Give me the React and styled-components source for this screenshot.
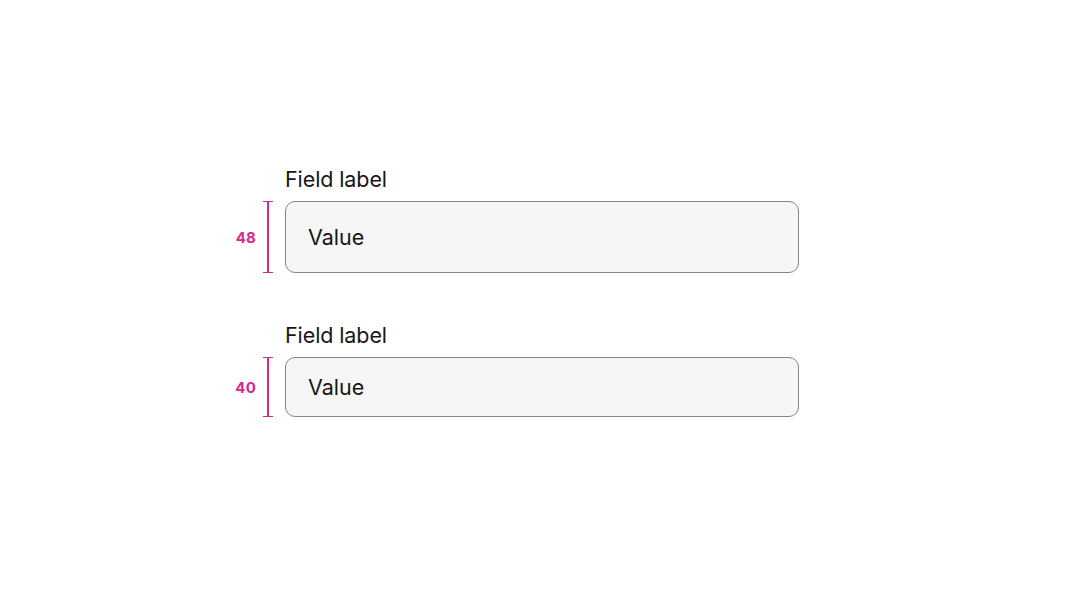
import React from "react";
import styled, { createGlobalStyle } from "styled-components";

const GlobalStyle = createGlobalStyle`
  html, body {
    margin: 0;
    padding: 0;
    background: #ffffff;
  }
  body {
    font-family: Inter, "Noto Sans", "Liberation Sans", sans-serif;
    color: #161616;
  }
`;

const Page = styled.div`
  width: 1083px;
  height: 600px;
  box-sizing: border-box;
  padding: 165px 0 0 230px;
  display: flex;
  flex-direction: column;
  gap: 48px;
`;

const FieldGrid = styled.div`
  display: grid;
  grid-template-columns: 55px 514px;
  row-gap: 8px;
`;

const Label = styled.div`
  grid-column: 2;
  font-size: 21.5px;
  line-height: 28px;
  letter-spacing: -0.1px;
  color: #161616;
`;

const Measure = styled.div`
  grid-column: 1;
  display: flex;
  align-items: center;
  justify-content: flex-end;
  padding-right: 12px;
  gap: 7px;
  color: #d6288f;
`;

const MeasureText = styled.span`
  font-size: 15px;
  font-weight: 700;
  letter-spacing: 0.2px;
`;

const Bracket = styled.div`
  position: relative;
  width: 10px;
  height: ${(p) => p.$h}px;
  border-top: 1.5px solid currentColor;
  border-bottom: 1.5px solid currentColor;
  box-sizing: border-box;

  &::before {
    content: "";
    position: absolute;
    left: 4.25px;
    top: 0;
    bottom: 0;
    width: 1.5px;
    background: currentColor;
  }
`;

const Input = styled.div`
  grid-column: 2;
  height: ${(p) => p.$h}px;
  box-sizing: border-box;
  border: 1.5px solid #858585;
  border-radius: 10px;
  background: #f6f6f6;
  display: flex;
  align-items: center;
  padding-left: 22px;
  font-size: 21.5px;
  color: #161616;
`;

const Field = ({ size, height }) => (
  <FieldGrid>
    <Label>Field label</Label>
    <Measure>
      <MeasureText>{size}</MeasureText>
      <Bracket $h={height} />
    </Measure>
    <Input $h={height}>Value</Input>
  </FieldGrid>
);

export default function App() {
  return (
    <>
      <GlobalStyle />
      <Page>
        <Field size="48" height={72} />
        <Field size="40" height={60} />
      </Page>
    </>
  );
}
